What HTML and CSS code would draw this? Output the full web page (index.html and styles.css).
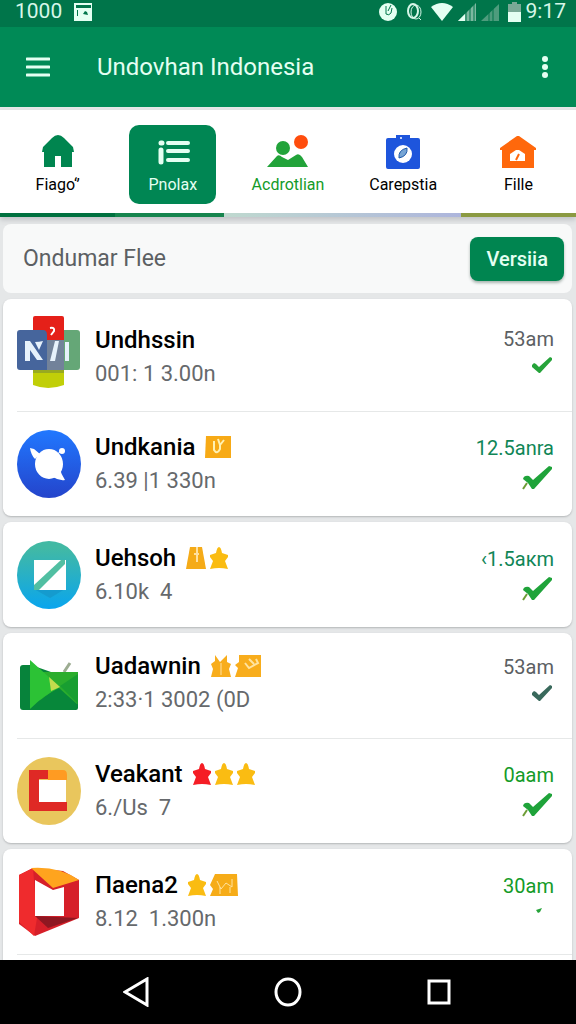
FILE: index.html
```html
<!DOCTYPE html>
<html lang="id">
<head>
  <meta charset="UTF-8">
  <meta name="viewport" content="width=device-width, initial-scale=1.0">
  <title>Undovhan Indonesia</title>
  <link rel="stylesheet" href="styles.css">
</head>
<body>

  <svg class="sprite" width="0" height="0" aria-hidden="true">
    <symbol id="check" viewBox="0 0 20 16"><path d="M0 8l2-2 2 1 3 3L18 0l2 1v2L8 16H7L0 10z"/></symbol>
    <symbol id="check-big" viewBox="0 0 30 24"><path d="M1 13q1-4 6-3l4 4L27 0l3 1v2L12 23h-2L6 17z"/><path d="M5 17l-4 6" stroke="#6d9c35" stroke-width="2"/></symbol>
    <symbol id="star" viewBox="0 0 18 22"><path d="M9 0q2 0 3 6l6 2v2l-3 4 3 8q-5-1-9-1t-9 1l3-8-3-4V8l6-2q1-6 3-6z"/></symbol>
  </svg>

  <div class="status">
    <span>1000</span>
    <svg width="18" height="18" viewBox="0 0 18 18"><path d="M0 0h18v18H0z" fill="#e4fff2"/><path d="M2 2h15v3H2zM3 7h1v6H3zM9 11l2-3 2 1 1 3z" fill="#00754a"/></svg>
    <div class="status-icons">
      <svg width="18" height="18" viewBox="0 0 18 18"><circle cx="9" cy="9" r="9" fill="#e4fff2"/><path d="M7 3v8q3 2 5-1l1-5M12 2l-3 6" fill="none" stroke="#00754a" stroke-width="1"/></svg>
      <svg class="gap-ring" width="15" height="18" viewBox="0 0 15 18" fill="none" stroke="#d6f7e8"><ellipse cx="6" cy="8" rx="5" ry="7" stroke-width="2"/><ellipse cx="9" cy="9" rx="5" ry="7"/><path d="M12 15l2 2"/></svg>
      <svg class="gap-wifi" width="22" height="18" viewBox="0 0 22 18"><path d="M0 4q11-8 22 0L11 18z" fill="#e4fff2"/></svg>
      <svg width="18" height="18" viewBox="0 0 18 18"><path d="M18 0v18H0z" fill="#7db8a0"/><path d="M0 18l7-7v7z" fill="#e4fff2"/><path d="M8 9v9M12 5v13M16 1v17" stroke="#00754a"/></svg>
      <svg width="18" height="18" viewBox="0 0 18 18"><path d="M18 1v17H0z" fill="#4e9c7d"/><path d="M8 9v9M12 5v13" stroke="#00754a"/></svg>
      <svg class="gap-battery" width="13" height="20" viewBox="0 0 13 20"><path d="M4 0h5v2h4v8H0V2h4z" fill="#7aa996"/><path d="M0 10h13v10H0z" fill="#e4fff2"/></svg>
      <span>9:17</span>
    </div>
  </div>

  <header class="appbar">
    <button class="icon-btn" aria-label="Menu"><svg width="24" height="20" viewBox="0 0 24 20"><path d="M1 2h22M1 10h22M1 18h22" stroke="#e4fff2" stroke-width="3" stroke-linecap="round"/></svg></button>
    <h1>Undovhan Indonesia</h1>
    <button class="icon-btn" aria-label="More"><svg width="8" height="22" viewBox="0 0 8 22" fill="#e4fff2"><circle cx="4" cy="3" r="3"/><circle cx="4" cy="11" r="3"/><circle cx="4" cy="19" r="3"/></svg></button>
  </header>

  <nav class="tabs">
    <a class="tab" href="#">
      <svg width="34" height="34" viewBox="0 0 34 34"><path d="M17 0q3 0 6 3l9 9 1 5h-2v15H20V21h-6v11H3V17H1l1-5 9-9q3-3 6-3z" fill="#00854f"/></svg>
      <span>Fiago‘’</span>
    </a>
    <a class="tab active" href="#">
      <svg width="34" height="34" viewBox="0 0 34 34"><g stroke="#e4fff2" stroke-width="4" stroke-linecap="round"><path d="M12 8h20M12 16h20M12 25h20"/><path d="M5 8h1M5 15v12" stroke-width="5"/></g></svg>
      <span>Pnolax</span>
    </a>
    <a class="tab green" href="#">
      <svg width="42" height="34" viewBox="0 0 42 34"><circle cx="16" cy="13" r="7" fill="#22a33a"/><path d="M0 32l10-11q2-2 5 1l6 3 8-5q3-2 6 2l6 10z" fill="#22a33a"/><circle cx="34" cy="7" r="7" fill="#ff4d0d"/></svg>
      <span>Acdrotlian</span>
    </a>
    <a class="tab" href="#">
      <svg width="34" height="34" viewBox="0 0 34 34"><path d="M2 3h8V0h14v3h8q2 0 2 2v27q0 2-2 2H2q-2 0-2-2V5q0-2 2-2z" fill="#1e55dc"/><circle cx="15" cy="3" r="1" fill="#fff"/><circle cx="17" cy="19" r="9" fill="#fff"/><path d="M13 23q-1-8 8-10 1 8-8 10z" fill="#77a5d4" stroke="#1c56a8"/></svg>
      <span>Carepstia</span>
    </a>
    <a class="tab" href="#">
      <svg width="36" height="34" viewBox="0 0 36 34"><path d="M17 1h2l17 12v2h-2v18H2V15H0v-2z" fill="#ff680c"/><path d="M10 26v-7l6-4h3l6 4v7z" fill="#fff"/><path d="M16 25l3-6" stroke="#ff680c" stroke-width="2"/></svg>
      <span>Fille</span>
    </a>
  </nav>

  <main>
    <section class="filter">
      <h2>Ondumar Flee</h2>
      <button class="version">Versiia</button>
    </section>

    <section class="card">
      <article class="row first">
        <svg class="app" viewBox="0 0 64 72">
          <path d="M16 50h31v19q-16 6-31 0z" fill="#c1cf08"/><path d="M16 52h31v5H16z" fill="#98aa20"/>
          <rect x="39" y="14" width="24" height="40" rx="3" fill="#65a777"/><rect x="16" width="31" height="26" rx="2" fill="#e52019"/>
          <path d="M3 14h23q4 0 4 5v5h17v30H3q-3 0-3-3V17q0-3 3-3z" fill="#46659c"/><path d="M30 24h17v30H30z" fill="#72829a"/>
          <path d="M33 12q5-1 4 3l-3 4" fill="none" stroke="#fff" stroke-width="2"/>
          <path d="M8 25h5l13 19h-6l-7-10v11H8zM18 26q4 0 8-1l-4 9zM38 25h4l-4 20h-5zM48 26h4v19h-4z" fill="#e6f1fb"/>
        </svg>
        <div class="info"><h3>Undhssin</h3><p>001: 1 3.00n</p></div>
        <div class="side"><span>53am</span><svg class="check" fill="#26a33a"><use href="#check"/></svg></div>
      </article>
      <article class="row">
        <svg class="app" viewBox="0 0 64 72">
          <defs><linearGradient id="blue" x2="0" y2="1"><stop stop-color="#2178ff"/><stop offset="1" stop-color="#2444cb"/></linearGradient></defs>
          <ellipse cx="32" cy="36" rx="32" ry="34" fill="url(#blue)"/><ellipse cx="32" cy="36" rx="14" ry="15" fill="#fff"/><path d="M13 20l4 1 6 5-5 5q-4-4-5-11zM36 49l7-8q1 5 5 11-6 1-12-3z" fill="#fff"/><path d="M38 28l6-5" stroke="#fff" stroke-width="1"/><circle cx="45" cy="23" r="3" fill="#fff"/>
        </svg>
        <div class="info">
          <h3>Undkania <svg width="26" height="24" viewBox="0 0 26 24"><path d="M1 1h25v22H0z" fill="#f7aa16"/><path d="M9 6v9q3 5 6-1V8M13 4l2 6 4-5" fill="none" stroke="#fff1b2" stroke-width="2"/></svg></h3>
          <p>6.39 |1 330n</p>
        </div>
        <div class="side teal"><span>12.5anra</span><svg class="check-big" fill="#1fa33a"><use href="#check-big"/></svg></div>
      </article>
    </section>

    <section class="card">
      <article class="row">
        <svg class="app" viewBox="0 0 64 72">
          <defs><linearGradient id="aqua" x2="0" y2="1"><stop offset=".1" stop-color="#42b9a4"/><stop offset="1" stop-color="#09a5ee"/></linearGradient></defs>
          <ellipse cx="32" cy="36" rx="32" ry="34" fill="url(#aqua)"/><path d="M17 50h31L33 59z" fill="#159bce"/><path d="M17 21h32v30H17z" fill="#fff"/><path d="M17 46l27-25h4v4L22 51h-5z" fill="#51bfa2"/>
        </svg>
        <div class="info">
          <h3>Uehsoh <span class="badges"><svg width="20" height="22" viewBox="0 0 20 22"><path d="M4 0h12l4 22H0z" fill="#f5ab18"/><path d="M11 0v15M8 7h5" stroke="#ffe0a0" stroke-width="2"/></svg><svg width="18" height="22" fill="#fabc12"><use href="#star"/></svg></span></h3>
          <p>6.10k &nbsp;4</p>
        </div>
        <div class="side teal"><span>‹1.5aкm</span><svg class="check-big" fill="#1fa33a"><use href="#check-big"/></svg></div>
      </article>
    </section>

    <section class="card">
      <article class="row compact">
        <svg class="app" viewBox="0 0 64 72">
          <path d="M47 25l6-9" stroke="#9cac91" stroke-width="3"/><path d="M6 18h8l20 7h27v36q0 2-2 2H6q-3 0-3-3V21q0-3 3-3z" fill="#07833b"/>
          <path d="M22 25h39v29q0 5-5 9H24z" fill="#2bad2d"/><path d="M13 62q16-15 29-21l19 17q-2 5-5 5H13z" fill="#07873a"/><path d="M43 39l18-12v30z" fill="#189e31"/><path d="M13 13l30 27q-16 8-30 22z" fill="#2cc235"/><path d="M32 30l11 10-9 4z" fill="#c2dc4d"/>
        </svg>
        <div class="info">
          <h3>Uadawnin <span class="badges"><svg width="20" height="22" viewBox="0 0 20 22" fill="#f8ad1c"><path d="M4 0l5 7 7-7v7l4 2-2 5 2 8H0l2-8-2-5 4-3z"/><path d="M10 8v12" stroke="#ffe0a0"/></svg><svg width="26" height="22" viewBox="0 0 26 22"><path d="M4 0h22v22H0l3-9-3-3 4-3z" fill="#f8ad1c"/><path d="M10 8l4 5 9-5-2-4M14 4l5 5" fill="none" stroke="#ffe3a0" stroke-width="2"/></svg></span></h3>
          <p>2:33·1 3002 (0D</p>
        </div>
        <div class="side"><span>53am</span><svg class="check" fill="#39695c"><use href="#check"/></svg></div>
      </article>
      <article class="row">
        <svg class="app" viewBox="0 0 64 72">
          <ellipse cx="32" cy="36" rx="32" ry="34" fill="#e9c65d"/><path d="M12 15h19v9H22v23h28v9H12z" fill="#df2925"/><path d="M31 15h15q4 0 4 5v5H31z" fill="#ff9b22"/><path d="M22 25h27v22H22z" fill="#fff"/>
        </svg>
        <div class="info">
          <h3>Veakant <span class="badges"><svg width="18" height="22" fill="#f51d25"><use href="#star"/></svg><svg width="18" height="22" fill="#fabc12"><use href="#star"/></svg><svg width="18" height="22" fill="#fabc12"><use href="#star"/></svg></span></h3>
          <p>6./Us &nbsp;7</p>
        </div>
        <div class="side green"><span>0aam</span><svg class="check-big" fill="#1fa33a"><use href="#check-big"/></svg></div>
      </article>
    </section>

    <section class="card">
      <article class="row">
        <svg class="app" viewBox="0 0 64 72">
          <path d="M2 9l14-7 30 3 16 9v38L18 70 2 58z" fill="#d61f29"/><path d="M2 9l14-7 4 50-3 18L2 56z" fill="#ef2b2d"/><path d="M14 2q28-2 48 12l-26 8z" fill="#ffa41e"/><path d="M18 14l18 10 11-3v29H18z" fill="#fff"/><path d="M18 50l43 2-30 10z" fill="#8e1721"/>
        </svg>
        <div class="info">
          <h3>Пaena2 <span class="badges"><svg width="18" height="22" fill="#fabc12"><use href="#star"/></svg><svg width="28" height="22" viewBox="0 0 28 22"><path d="M5 0h22l1 22H0l3-7-3-4z" fill="#f6ac18"/><path d="M7 7l4 8 5-6 6 4V5M10 20v-7M20 19v-6" fill="none" stroke="#ffe3a0"/></svg></span></h3>
          <p>8.12 &nbsp;1.300n</p>
        </div>
        <div class="side green"><span>30am</span><svg class="dot" viewBox="0 0 6 5"><path d="M0 2l6-2-2 4-2 1z" fill="#26a33a"/></svg></div>
      </article>
      <article class="row"></article>
    </section>
  </main>

  <footer class="softkeys">
    <button aria-label="Back"><svg width="26" height="30" viewBox="0 0 26 30"><path d="M24 2v26L2 15z"/></svg></button>
    <button aria-label="Home"><svg width="28" height="30" viewBox="0 0 28 30"><ellipse cx="14" cy="15" rx="12" ry="13"/></svg></button>
    <button aria-label="Recent apps"><svg width="24" height="26" viewBox="0 0 24 26"><path d="M2 2h20v22H2z"/></svg></button>
  </footer>

</body>
</html>
```
FILE: styles.css
```css
* {
  box-sizing: border-box;
}

body {
  margin: 0;
  height: 100vh;
  display: flex;
  flex-direction: column;
  overflow: hidden;
  background: #e5e7e8;
  font-family: Roboto, "Liberation Sans", sans-serif;
  color: #000;
}

h1, h2, h3, p {
  margin: 0;
}

button {
  border: 0;
  background: none;
  padding: 0;
  font-family: inherit;
  cursor: pointer;
}

svg {
  display: block;
  flex: none;
}

.sprite {
  position: absolute;
}

.status {
  display: flex;
  align-items: center;
  gap: 12px;
  padding: 0 10px 4px 15px;
  background: #00754a;
  color: #d6f7e8;
  font-size: 21px;
  line-height: 23px;
}

.status-icons {
  display: flex;
  align-items: center;
  gap: 5px;
  margin-left: auto;
}

.gap-ring {
  margin-left: 5px;
}

.gap-wifi {
  margin-left: 4px;
}

.gap-battery {
  margin-left: 4px;
}

.appbar {
  display: flex;
  align-items: center;
  flex: none;
  height: 80px;
  padding: 0 27px 0 26px;
  background: #008a56;
  color: #e4fff2;
}

.appbar h1 {
  flex: 1;
  margin-left: 47px;
  font-size: 24px;
  font-weight: 400;
  line-height: 32px;
}

.tabs {
  display: flex;
  flex: none;
  margin-top: 3px;
  padding: 15px 0 9px;
  border-bottom: 4px solid;
  border-image: linear-gradient(90deg, #00713f 20%, #16854e 20% 39%, #bfd9cf 39%, #adb5dc 80%, #8b9a42 80%) 1;
  background: #fff;
  box-shadow: 0 3px 5px #c2c5c8;
}

.tab {
  flex: 1;
  display: flex;
  flex-direction: column;
  align-items: center;
  gap: 5px;
  margin: 0 14px;
  padding: 10px 0 8px;
  border-radius: 10px;
  color: #000;
  font-size: 16px;
  line-height: 22px;
  white-space: nowrap;
  text-decoration: none;
}

.tab span {
  margin: 0 -14px;
}

.tab.active {
  background: #008653;
  color: #e4fff2;
}

.tab.green {
  color: #149b28;
}

main {
  flex: 1;
  min-height: 0;
  overflow: hidden;
  display: flex;
  flex-direction: column;
  gap: 6px;
  padding: 7px 4px 0 3px;
}

.filter {
  display: flex;
  align-items: center;
  justify-content: space-between;
  flex: none;
  height: 69px;
  padding: 0 8px 0 20px;
  border-radius: 8px;
  background: #f8f9f9;
}

.filter h2 {
  color: #5c6063;
  font-size: 23px;
  font-weight: 400;
}

.version {
  padding: 8px 16px;
  border-radius: 8px;
  background: #008550;
  box-shadow: 0 2px 3px #a9b5b0;
  color: #e4fff2;
  font-size: 20px;
  font-weight: 500;
  line-height: 28px;
}

.card {
  flex: none;
  border-radius: 8px;
  background: #fff;
  box-shadow: 0 1px 2px #b4b6b8;
}

.row {
  display: flex;
  gap: 14px;
  height: 105px;
  padding: 17px 18px 0 14px;
}

.row.first {
  height: 112px;
}

.row.compact {
  padding-top: 14px;
}

.row + .row {
  background: linear-gradient(#e6e8e8, #e6e8e8) 14px 0 / 100% 1px no-repeat;
}

.app {
  width: 64px;
  height: 72px;
}

.info {
  flex: 1;
  min-width: 0;
  padding-top: 2px;
}

.first .info,
.first .side {
  padding-top: 7px;
}

.info h3 {
  display: flex;
  align-items: center;
  gap: 10px;
  font-size: 24px;
  font-weight: 500;
  line-height: 34px;
  white-space: nowrap;
}

.badges {
  display: flex;
  gap: 4px;
}

.info p {
  color: #66696c;
  font-size: 22px;
  line-height: 34px;
}

.side {
  display: flex;
  flex-direction: column;
  align-items: flex-end;
  padding-top: 4px;
  color: #5c6063;
  font-size: 20px;
  line-height: 32px;
}

.side.teal {
  color: #108657;
}

.side.green {
  color: #149b28;
}

.check {
  width: 20px;
  height: 16px;
  margin: 2px 2px 0 0;
}

.check-big {
  width: 30px;
  height: 24px;
  margin: 2px 2px 0 0;
}

.dot {
  width: 6px;
  height: 5px;
  margin: 6px 12px 0 0;
}

.softkeys {
  display: flex;
  align-items: center;
  justify-content: center;
  gap: 125px;
  flex: none;
  height: 64px;
  padding-right: 2px;
  background: #000;
}

.softkeys svg {
  fill: none;
  stroke: #fff;
  stroke-width: 3;
}
```
